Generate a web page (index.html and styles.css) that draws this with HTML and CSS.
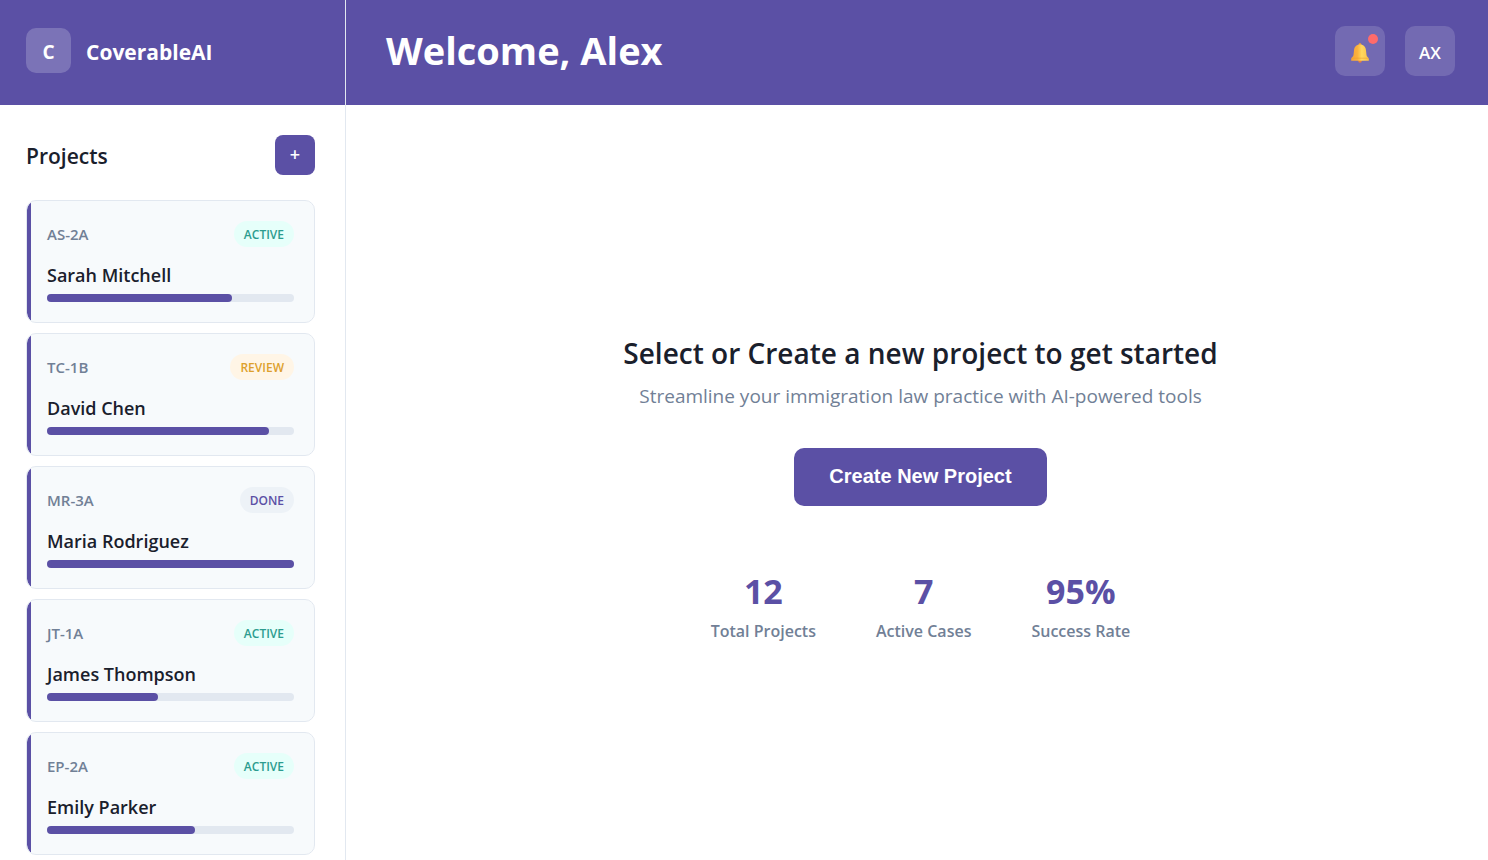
FILE: index.html
```html
<!DOCTYPE html>
<html lang="en">
<head>
<meta charset="utf-8">
<meta name="viewport" content="width=device-width, initial-scale=1">
<title>CoverableAI</title>
<link rel="stylesheet" href="styles.css">
</head>
<body>
<div class="app">
  <aside class="sidebar">
    <div class="brand">
      <span class="brand-mark">C</span>
      <span class="brand-name">CoverableAI</span>
    </div>
    <section class="projects">
      <div class="projects-head">
        <h2 class="projects-title">Projects</h2>
        <button class="add-button" type="button" aria-label="Add project">+</button>
      </div>
      <ul class="project-list">
        <li class="card">
          <div class="card-top"><span class="card-code">AS-2A</span><span class="badge badge-active">ACTIVE</span></div>
          <h3 class="card-name">Sarah Mitchell</h3>
          <div class="track"><div class="fill" style="width: 75%"></div></div>
        </li>
        <li class="card">
          <div class="card-top"><span class="card-code">TC-1B</span><span class="badge badge-review">REVIEW</span></div>
          <h3 class="card-name">David Chen</h3>
          <div class="track"><div class="fill" style="width: 90%"></div></div>
        </li>
        <li class="card">
          <div class="card-top"><span class="card-code">MR-3A</span><span class="badge badge-done">DONE</span></div>
          <h3 class="card-name">Maria Rodriguez</h3>
          <div class="track"><div class="fill" style="width: 100%"></div></div>
        </li>
        <li class="card">
          <div class="card-top"><span class="card-code">JT-1A</span><span class="badge badge-active">ACTIVE</span></div>
          <h3 class="card-name">James Thompson</h3>
          <div class="track"><div class="fill" style="width: 45%"></div></div>
        </li>
        <li class="card">
          <div class="card-top"><span class="card-code">EP-2A</span><span class="badge badge-active">ACTIVE</span></div>
          <h3 class="card-name">Emily Parker</h3>
          <div class="track"><div class="fill" style="width: 60%"></div></div>
        </li>
      </ul>
    </section>
  </aside>
  <div class="page">
    <header class="topbar">
      <h1 class="welcome">Welcome, Alex</h1>
      <div class="actions">
        <button class="tile" type="button" aria-label="Notifications">
          <svg class="bell" viewBox="0 0 20 22" aria-hidden="true">
            <defs>
              <linearGradient id="gold" x1="0" x2="1" y1="0" y2="0">
                <stop offset="0" stop-color="#f5a338"/>
                <stop offset=".35" stop-color="#fbb13c"/>
                <stop offset=".6" stop-color="#ffd85f"/>
                <stop offset="1" stop-color="#fbc048"/>
              </linearGradient>
            </defs>
            <circle cx="10" cy="19" r="1.800" fill="#e8823b"/>
            <circle cx="10" cy="2.200" r="1.200" fill="#e99a3c"/>
            <path d="M10 2.600C6.200 2.600 4.300 5 4 8.400L3.500 13C3.400 14.800 1.200 15.400 1.200 17V18.800H18.800V17C18.800 15.400 16.600 14.800 16.500 13L16 8.400C15.700 5 13.800 2.600 10 2.600Z" fill="url(#gold)"/>
            <path d="M1.600 16.200H18.400" stroke="#e9a030" stroke-width=".6" fill="none"/>
          </svg>
          <span class="dot"></span>
        </button>
        <button class="tile" type="button" aria-label="Account AX">AX</button>
      </div>
    </header>
    <main class="hero">
      <h2 class="hero-title">Select or Create a new project to get started</h2>
      <p class="hero-text">Streamline your immigration law practice with AI-powered tools</p>
      <button class="primary" type="button">Create New Project</button>
      <dl class="stats">
        <div class="stat"><dt class="stat-label">Total Projects</dt><dd class="stat-value">12</dd></div>
        <div class="stat"><dt class="stat-label">Active Cases</dt><dd class="stat-value">7</dd></div>
        <div class="stat"><dt class="stat-label">Success Rate</dt><dd class="stat-value">95%</dd></div>
      </dl>
    </main>
  </div>
</div>
</body>
</html>
```
FILE: styles.css
```css
* {
  box-sizing: border-box;
  margin: 0;
  padding: 0;
}

body {
  font-family: "Segoe UI", "Open Sans", "Noto Sans", sans-serif;
  color: #1a202c;
  background: #fff;
}

.app {
  display: flex;
  height: 100vh;
  overflow: hidden;
}

.sidebar {
  flex: 0 0 346px;
  border-right: 1px solid #e2e8f0;
}

.brand {
  display: flex;
  align-items: center;
  gap: 15px;
  height: 105px;
  padding: 0 26px 4px;
  background: #5b50a5;
  color: #fff;
}

.brand-mark {
  display: grid;
  place-items: center;
  width: 45px;
  height: 45px;
  padding-top: 2px;
  border-radius: 10px;
  background: rgba(255, 255, 255, 0.2);
  font-size: 19px;
  font-weight: 700;
}

.brand-name {
  padding-top: 2px;
  font-size: 21px;
  font-weight: 700;
}

.projects {
  padding: 30px 30px 0 26px;
}

.projects-head {
  display: flex;
  align-items: center;
  justify-content: space-between;
  margin-bottom: 25px;
}

.projects-title {
  padding-top: 2px;
  font-size: 21px;
  font-weight: 600;
  line-height: 28px;
}

button {
  border: 0;
  color: #fff;
  cursor: pointer;
}

.add-button {
  width: 40px;
  height: 40px;
  padding-bottom: 3px;
  border-radius: 8px;
  background: #5b50a5;
  font: 600 18px "Open Sans", sans-serif;
}

.project-list {
  display: grid;
  gap: 10px;
  list-style: none;
}

.card {
  padding: 20px;
  border: 1px solid #e2e8f0;
  border-radius: 10px;
  background: linear-gradient(to right, #5b50a5 4px, #f7fafc 4px) padding-box;
}

.card-top {
  display: flex;
  align-items: center;
  justify-content: space-between;
  margin-bottom: 15px;
}

.card-code {
  color: #718096;
  font-size: 15px;
  font-weight: 600;
}

.badge {
  padding: 5px 10px 3px;
  border-radius: 13px;
  font-size: 12px;
  font-weight: 600;
  line-height: 18px;
}

.badge-active {
  background: #e6fffa;
  color: #2c9c8f;
}

.badge-review {
  background: #fff5e6;
  color: #dda02c;
}

.badge-done {
  background: #edf2f7;
  color: #5b50a5;
}

.card-name {
  margin-bottom: 6px;
  font-size: 18px;
  font-weight: 600;
  line-height: 26px;
}

.track {
  height: 8px;
  border-radius: 4px;
  background: #e2e8f0;
}

.fill {
  height: 100%;
  border-radius: 4px;
  background: #5b50a5;
}

.page {
  display: flex;
  flex: 1;
  flex-direction: column;
}

.topbar {
  display: flex;
  align-items: center;
  justify-content: space-between;
  height: 105px;
  padding: 0 33px 3px 40px;
  background: #5b50a5;
  color: #fff;
}

.welcome {
  padding-bottom: 2px;
  font-size: 38px;
  font-weight: 700;
}

.actions {
  display: flex;
  gap: 20px;
}

.tile {
  position: relative;
  display: grid;
  place-items: center;
  width: 50px;
  height: 50px;
  padding-top: 3px;
  border-radius: 10px;
  background: rgba(255, 255, 255, 0.15);
  font: 600 17px "Open Sans", sans-serif;
}

.bell {
  width: 20px;
  height: 22px;
}

.dot {
  position: absolute;
  top: 8px;
  right: 7px;
  width: 10px;
  height: 10px;
  border-radius: 50%;
  background: #ff6b6b;
}

.hero {
  display: flex;
  flex: 1;
  flex-direction: column;
  align-items: center;
  justify-content: center;
  padding: 12px 33px 0 40px;
  text-align: center;
}

.hero-title {
  margin-bottom: 11px;
  font-size: 28px;
  font-weight: 600;
  line-height: 38px;
}

.hero-text {
  margin-bottom: 39px;
  color: #718096;
  font-size: 19px;
  line-height: 26px;
}

.primary {
  padding: 16px 35px 18px;
  border-radius: 10px;
  background: #5b50a5;
  font: 700 20px/24px Arial, "Liberation Sans", sans-serif;
}

.stats {
  display: flex;
  gap: 60px;
  margin-top: 61px;
}

.stat {
  display: flex;
  flex-direction: column-reverse;
}

.stat-value {
  color: #5b50a5;
  font-size: 34px;
  font-weight: 700;
  line-height: 48px;
}

.stat-label {
  margin-top: 4px;
  color: #718096;
  font-size: 16px;
  font-weight: 600;
  line-height: 24px;
}
```
